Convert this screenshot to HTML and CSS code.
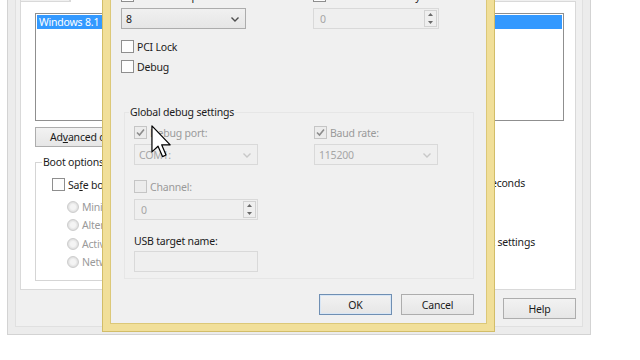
FILE: index.html
```html
<!DOCTYPE html>
<html lang="en">

<head>
  <meta charset="UTF-8">
  <meta name="viewport" content="width=device-width, initial-scale=1.0">
  <title>Boot Advanced Options</title>
  <link rel="stylesheet" href="styles.css">
</head>

<body>
  <!-- System Configuration, behind -->
  <div class="window back">
    <div class="client">
      <div class="tabs">
        <span class="tab">General</span>
        <span class="tab active">Boot</span>
        <span class="tab">Services</span>
      </div>
      <div class="tab-page">
        <div class="os-list">
          <div class="os-item selected">Windows 8.1 (C:\Windows) : Current OS; Default OS</div>
        </div>
        <button class="btn btn-adv">Ad<u>v</u>anced options...</button>
        <div class="boot-row">
          <fieldset class="group boot-options">
            <legend>Boot options</legend>
            <label class="check"><span class="box"></span><span>Sa<u>f</u>e boot</span></label>
            <div class="radios">
              <label class="radio disabled"><span class="dot"></span>Minimal</label>
              <label class="radio disabled"><span class="dot"></span>Alternate shell</label>
              <label class="radio disabled"><span class="dot"></span>Active Directory repair</label>
              <label class="radio disabled"><span class="dot"></span>Network</label>
            </div>
          </fieldset>
          <div class="side">
            <div class="timeout">Timeout: <span class="field">30</span> seconds</div>
            <div class="perm">Make all boot settings</div>
          </div>
        </div>
      </div>
      <div class="actions back-actions">
        <button class="btn">Help</button>
      </div>
    </div>
  </div>

  <!-- Boot Advanced Options, in front -->
  <div class="window front">
    <div class="client">
      <div class="cols">
        <div class="col">
          <label class="check"><span class="box"></span>Number of processors:</label>
          <div class="combo">8<svg class="chev" width="8" height="5" viewBox="0 0 8 5"><path d="M.5 .5 4 4 7.5 .5" /></svg></div>
        </div>
        <div class="col">
          <label class="check"><span class="box"></span>Maximum memory:</label>
          <div class="spin disabled"><span>0</span><span class="spin-btns"><svg width="5" height="3" viewBox="0 0 5 3"><path d="M0 3 2.5 0 5 3Z" /></svg><svg width="5" height="3" viewBox="0 0 5 3"><path d="M0 0 2.5 3 5 0Z" /></svg></span></div>
        </div>
      </div>

      <label class="check pci"><span class="box"></span>PCI Lock</label>
      <label class="check dbg"><span class="box"></span>Debug</label>

      <fieldset class="group debug-settings">
        <legend>Global debug settings</legend>
        <div class="cols inner">
          <div class="col">
            <label class="check disabled"><span class="box checked"><svg width="11" height="11" viewBox="0 0 11 11"><path d="M2 5.5 4.5 8 9 2.5" /></svg></span>Debug port:</label>
            <div class="combo disabled">COM1:<svg class="chev" width="8" height="5" viewBox="0 0 8 5"><path d="M.5 .5 4 4 7.5 .5" /></svg></div>
            <label class="check disabled channel"><span class="box"></span>Channel:</label>
            <div class="spin disabled"><span>0</span><span class="spin-btns"><svg width="5" height="3" viewBox="0 0 5 3"><path d="M0 3 2.5 0 5 3Z" /></svg><svg width="5" height="3" viewBox="0 0 5 3"><path d="M0 0 2.5 3 5 0Z" /></svg></span></div>
            <div class="usb-label">USB target name:</div>
            <div class="textbox disabled"></div>
          </div>
          <div class="col">
            <label class="check disabled"><span class="box checked"><svg width="11" height="11" viewBox="0 0 11 11"><path d="M2 5.5 4.5 8 9 2.5" /></svg></span>Baud rate:</label>
            <div class="combo disabled">115200<svg class="chev" width="8" height="5" viewBox="0 0 8 5"><path d="M.5 .5 4 4 7.5 .5" /></svg></div>
          </div>
        </div>
      </fieldset>

      <div class="actions">
        <button class="btn default">OK</button>
        <button class="btn">Cancel</button>
      </div>
    </div>
  </div>

  <!-- mouse pointer -->
  <svg class="cursor" width="21" height="33" viewBox="0 0 12 19">
    <path d="M.5 .5V15.5L4 12.2 6.6 18.2 8.6 17.3 6.1 11.4H11Z" />
  </svg>
</body>

</html>
```

FILE: styles.css
```css
* {
  margin: 0;
  padding: 0;
  box-sizing: border-box;
}

:root {
  --face: #f0f0f0;
  --text: #1b1b1b;
  --muted: #9a9a9a;
  --line-off: #d9d9d9;
  --frame: #f1df99;
  --frame-edge: #d2bd68;
}

body {
  position: relative;
  width: 640px;
  height: 360px;
  overflow: hidden;
  background: #fff;
  font-family: "Noto Sans", "Open Sans", sans-serif;
  font-size: 10.5px;
  letter-spacing: -.2px;
  line-height: 14px;
  color: var(--text);
}

button {
  font: inherit;
  letter-spacing: inherit;
  color: inherit;
}

u {
  text-decoration-thickness: 1px;
  text-underline-offset: 1px;
}

/** windows sit on the desktop at their own place */
.window {
  position: absolute;
  border: 1px solid #d3d3d3;
  padding: 7px;
}

.window > .client {
  height: 100%;
  display: flex;
  flex-direction: column;
  background: var(--face);
}

.back {
  left: 7px;
  top: -40px;
  width: 584px;
  height: 375px;
  background: #ececec;

  & .client {
    border: 1px solid #e0e0e0;
    padding: 12px 6px 0 4px;
  }
}

.front {
  left: 102px;
  top: -40px;
  width: 393px;
  height: 372px;
  background: var(--frame);
  border-color: var(--frame-edge);
  z-index: 2;

  & .client {
    border: 1px solid #dcc878;
    padding: 20px 11px 0 10px;
  }
}

/** tabs */
.tabs {
  display: flex;
  height: 20px;
}

.tab {
  border: 1px solid var(--line-off);
  border-bottom: 0;
  padding: 2px 8px 0;
  width: 50px;
  background: var(--face);
}

.tab.active {
  width: 42px;
  background: #fff;
  margin-bottom: -1px;
  position: relative;
  z-index: 1;
}

.tab-page {
  height: 289px;
  background: #fff;
  border: 1px solid var(--line-off);
  padding: 11px 12px 0 14px;
}

.os-list {
  height: 108px;
  width: 529px;
  border: 1px solid #8f8f8f;
  padding: 1px;
}

.os-item {
  height: 14px;
  padding-left: 2px;
  white-space: nowrap;
}

.os-item.selected {
  background: #3399ff;
  color: #fff;
}

/** buttons */
.btn {
  height: 21px;
  width: 73px;
  border: 1px solid #adadad;
  background: linear-gradient(#f2f2f2, #e6e6e6);
  text-align: center;
  white-space: nowrap;
}

.btn.default {
  border-color: #6f8fb3;
  box-shadow: inset 0 0 0 1px #d8e6f5;
}

.btn-adv {
  width: 106px;
  height: 20px;
  margin-top: 6px;
  text-align: left;
  padding-left: 14px;
}

.actions {
  display: flex;
  justify-content: flex-end;
  gap: 9px;
}

.back-actions {
  margin-top: 8px;
}

.front .actions {
  margin-top: 15px;
  padding-right: 1px;
}

/** group boxes */
.group {
  border: 1px solid #e3e3e3;
}

.group legend {
  padding: 0 1px;
}

.boot-row {
  display: flex;
  margin-top: 8px;
}

.boot-options {
  width: 340px;
  height: 126px;
  padding: 0 0 0 16px;
  border-color: #d5d5d5;

  & legend {
    margin-left: -10px;
  }

  & .check {
    margin-top: 9px;
  }
}

.radios {
  display: flex;
  flex-direction: column;
  gap: 5.5px;
  margin-top: 9px;
  padding-left: 15px;
}

.side {
  width: 155px;
  margin-left: 5px;
  text-align: right;
  padding-top: 19px;

  & .timeout {
    padding-right: 10px;
  }

  & .field {
    display: inline-block;
    width: 40px;
    height: 20px;
    border: 1px solid #abadb3;
    vertical-align: middle;
  }

  & .perm {
    margin-top: 41px;
  }
}

/** check boxes and radios */
.check,
.radio {
  display: flex;
  align-items: center;
  gap: 3px;
  height: 13px;
  white-space: nowrap;
}

.box {
  width: 13px;
  height: 13px;
  flex-shrink: 0;
  border: 1px solid #8e8e8e;
  background: #fdfdfd;
  display: flex;
  align-items: center;
  justify-content: center;

  & svg {
    fill: none;
    stroke: #8c8c8c;
    stroke-width: 1.6;
  }
}

.dot {
  width: 12px;
  height: 12px;
  border-radius: 50%;
  border: 1px solid #cdcdcd;
  background: radial-gradient(circle, #f4f4f4 35%, #dedede 70%);
  flex-shrink: 0;
}

.disabled {
  color: var(--muted);

  & .box {
    border-color: #c5c5c5;
    background: #ececec;
  }
}

/** the front dialog fields */
.cols {
  display: grid;
  grid-template-columns: 125px 126px;
  column-gap: 67px;
}

.col .check + .combo,
.col .check + .spin {
  margin-top: 6px;
}

.combo,
.spin,
.textbox {
  position: relative;
  height: 21px;
  border: 1px solid #acacac;
  display: flex;
  align-items: center;
  padding-left: 4px;
}

.combo {
  background: linear-gradient(#f0f0f0, #e6e6e6);

  & .chev {
    position: absolute;
    right: 6px;
    top: 8px;
    fill: none;
    stroke: #4d4d4d;
    stroke-width: 1.4;
  }
}

.combo.disabled,
.spin.disabled,
.textbox.disabled {
  border-color: var(--line-off);
  background: #efefef;
  color: #a6a6a6;

  & .chev {
    stroke: #c8c8c8;
  }
}

.spin {
  padding-left: 6px;
}

.spin-btns {
  position: absolute;
  right: 1px;
  top: 1px;
  bottom: 1px;
  width: 13px;
  border: 1px solid #d2d2d2;
  display: flex;
  flex-direction: column;
  align-items: center;
  justify-content: space-around;
  fill: #6a6a6a;
}

.pci {
  margin-top: 11px;
}

.dbg {
  margin-top: 7px;
}

.debug-settings {
  width: 350px;
  margin: 32px 0 0 3px;
  padding: 0 0 6px 9px;
  border-color: #e6e6e6;

  & legend {
    margin-left: -5px;
  }

  & .cols {
    grid-template-columns: 124px 124px;
    column-gap: 56px;
    margin-top: 7px;
  }

  & .col .check + .combo {
    margin-top: 5px;
  }
}

.channel {
  margin-top: 15px;
}

.channel + .spin {
  margin-top: 3px;
}

.usb-label {
  margin-top: 14px;
  color: var(--text);
}

.textbox {
  margin-top: 3px;
}

/** mouse pointer over everything */
.cursor {
  position: absolute;
  left: 151px;
  top: 125px;
  z-index: 5;
  fill: #fff;
  stroke: #000;
  stroke-width: .7;
  stroke-linejoin: round;
}
```
